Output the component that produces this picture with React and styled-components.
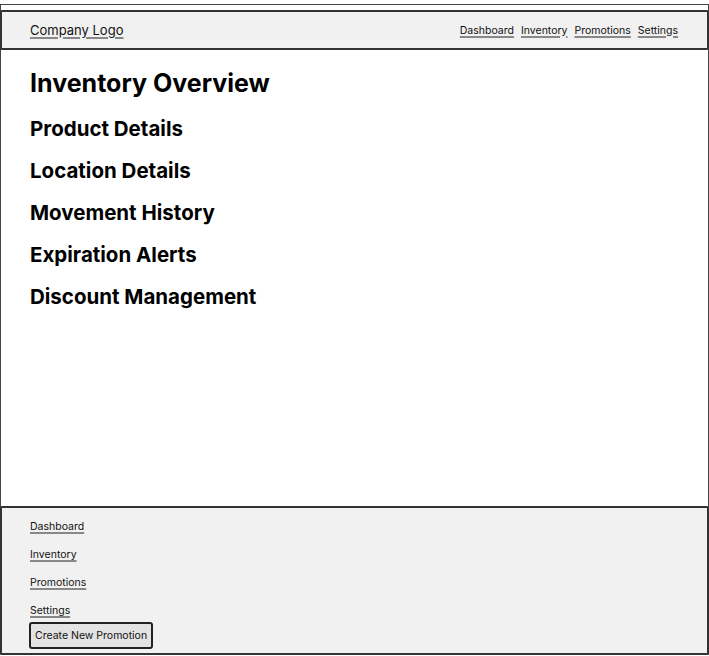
import React from "react";
import styled, { createGlobalStyle } from "styled-components";

const GlobalStyle = createGlobalStyle`
  html, body {
    margin: 0;
    padding: 0;
    background: #ffffff;
  }
  body {
    font-family: Inter, "Noto Sans", "Liberation Sans", sans-serif;
    color: #000;
  }
`;

const Frame = styled.div`
  box-sizing: border-box;
  margin-top: 4px;
  height: 651px;
  border: 1px solid #444;
  border-bottom-color: #999;
  display: flex;
  flex-direction: column;
  padding-top: 5px;
`;

const Header = styled.header`
  box-sizing: border-box;
  height: 40px;
  margin: 0 -1px;
  display: flex;
  align-items: center;
  justify-content: space-between;
  padding: 0 29px 0 28px;
  background: #f1f1f1;
  border: 2px solid #333;
  border-radius: 2px;
`;

const Link = styled.a`
  color: #111;
  font-size: ${(p) => (p.$size ? p.$size : 10.5)}px;
  text-decoration: underline;
  text-decoration-color: #888;
  text-decoration-thickness: 2px;
  text-underline-offset: 2px;
  cursor: pointer;
`;

const Nav = styled.nav`
  display: flex;
  gap: 7px;
`;

const Main = styled.main`
  flex: 1;
  padding: 0 29px;
`;

const Title = styled.h1`
  font-size: 25px;
  line-height: 30px;
  font-weight: 700;
  margin: 18px 0 19px;
`;

const Section = styled.h2`
  font-size: 20.5px;
  line-height: 24px;
  font-weight: 700;
  margin: 0 0 18px;
`;

const Footer = styled.footer`
  box-sizing: border-box;
  margin: 0 -1px -1px;
  height: 149px;
  background: #f1f1f1;
  border: 2px solid #333;
  border-radius: 2px;
  padding: 11px 28px 0 28px;
  display: flex;
  flex-direction: column;
  align-items: flex-start;
`;

const FooterLink = styled(Link)`
  display: block;
  line-height: 16px;
  margin-bottom: 12px;
`;

const Button = styled.button`
  font-family: inherit;
  font-size: 10.5px;
  color: #111;
  background: #e3e3e3;
  border: 2px solid #222;
  border-radius: 3px;
  padding: 5px 4px;
  margin: -9px 0 0 -1px;
`;

const navItems = ["Dashboard", "Inventory", "Promotions", "Settings"];
const sections = [
  "Product Details",
  "Location Details",
  "Movement History",
  "Expiration Alerts",
  "Discount Management",
];

export default function App() {
  return (
    <>
      <GlobalStyle />
      <Frame>
        <Header>
          <Link $size={13}>Company Logo</Link>
          <Nav>
            {navItems.map((item) => (
              <Link key={item}>{item}</Link>
            ))}
          </Nav>
        </Header>
        <Main>
          <Title>Inventory Overview</Title>
          {sections.map((s) => (
            <Section key={s}>{s}</Section>
          ))}
        </Main>
        <Footer>
          {navItems.map((item) => (
            <FooterLink key={item}>{item}</FooterLink>
          ))}
          <Button>Create New Promotion</Button>
        </Footer>
      </Frame>
    </>
  );
}
